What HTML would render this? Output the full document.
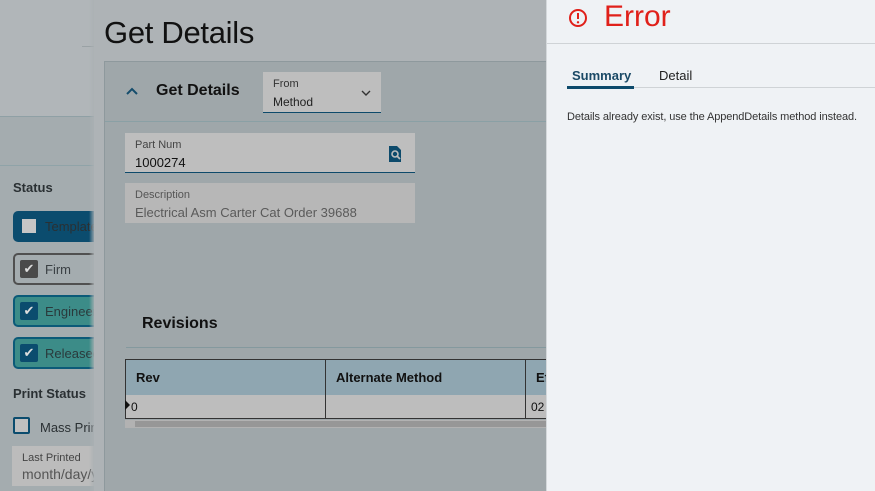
<!DOCTYPE html>
<html><head><meta charset="utf-8"><style>
*{box-sizing:border-box;margin:0;padding:0}
body{width:875px;height:491px;overflow:hidden;position:relative;font-family:"Liberation Sans",sans-serif;background:#a4acaf}
.abs{position:absolute}
</style></head><body>
<div class="abs" style="left:0;top:0;width:94px;height:117px;background:#b1b6b9"></div>
<div class="abs" style="left:82px;top:46px;width:12px;height:1px;background:#9aa2a5"></div>
<div class="abs" style="left:0;top:116px;width:94px;height:1px;background:#8fa0a5"></div>
<div class="abs" style="left:0;top:117px;width:94px;height:49px;background:#a4acaf"></div>
<div class="abs" style="left:0;top:165px;width:94px;height:1px;background:#8fa3a8"></div>
<div class="abs" style="left:13px;top:180px;font-size:13px;font-weight:bold;color:#2a3033">Status</div>
<div class="abs" style="left:13px;top:211px;width:90px;height:31px;background:#0b4c6e;border-radius:5px"></div>
<div class="abs" style="left:22px;top:219px;width:14px;height:14px;background:#c6c6c6"></div>
<div class="abs" style="left:45px;top:219px;font-size:13px;color:#2a3033">Template</div>
<div class="abs" style="left:13px;top:253px;width:90px;height:32px;border:2px solid #505050;border-radius:5px"></div>
<div class="abs" style="left:20px;top:260px;width:18px;height:18px;background:#4a4a4a;border-radius:2px;color:#ddd;font-size:13px;text-align:center;line-height:18px">✔</div>
<div class="abs" style="left:45px;top:262px;font-size:13px;color:#3a4044">Firm</div>
<div class="abs" style="left:13px;top:295px;width:90px;height:32px;border:2px solid #0b5a78;border-radius:5px;background:#3c8c88"></div>
<div class="abs" style="left:20px;top:302px;width:18px;height:18px;background:#0b4c6e;border-radius:2px;color:#ddd;font-size:13px;text-align:center;line-height:18px">✔</div>
<div class="abs" style="left:45px;top:304px;font-size:13px;color:#2a3a3c">Engineered</div>
<div class="abs" style="left:13px;top:337px;width:90px;height:32px;border:2px solid #0b5a78;border-radius:5px;background:#3c8c88"></div>
<div class="abs" style="left:20px;top:344px;width:18px;height:18px;background:#0b4c6e;border-radius:2px;color:#ddd;font-size:13px;text-align:center;line-height:18px">✔</div>
<div class="abs" style="left:45px;top:346px;font-size:13px;color:#2a3a3c">Released</div>
<div class="abs" style="left:13px;top:386px;font-size:13px;font-weight:bold;color:#2a3033">Print Status</div>
<div class="abs" style="left:13px;top:417px;width:17px;height:17px;border:2px solid #0b4c6e;background:#c0c0c0;border-radius:2px"></div>
<div class="abs" style="left:40px;top:420px;font-size:13px;color:#2a3033">Mass Print</div>
<div class="abs" style="left:12px;top:446px;width:90px;height:40px;background:#bcbcbc"></div>
<div class="abs" style="left:22px;top:452px;font-size:11px;color:#444">Last Printed</div>
<div class="abs" style="left:22px;top:466px;font-size:14px;color:#555">month/day/y</div>
<div class="abs" style="left:89px;top:0;width:6px;height:491px;background:linear-gradient(90deg,rgba(160,168,171,0),#aab0b3)"></div>
<div class="abs" style="left:94px;top:0;width:452px;height:491px;background:#aeb3b6;overflow:hidden">
  <div class="abs" style="left:10px;top:15px;font-size:31px;letter-spacing:-0.3px;color:#111">Get Details</div>
  <div class="abs" style="left:10px;top:61px;width:460px;height:440px;background:#9fa7aa;border-top:1px solid #8e999d;border-left:1px solid #8e999d"></div>
  <div class="abs" style="left:11px;top:121px;width:460px;height:1px;background:#8aa0a5"></div>
  <svg class="abs" style="left:32px;top:87px" width="12" height="8" viewBox="0 0 12 8"><path d="M1 7L6 2L11 7" fill="none" stroke="#154d6c" stroke-width="2"/></svg>
  <div class="abs" style="left:62px;top:82px;font-size:16px;font-weight:bold;color:#111">Get Details</div>
  <div class="abs" style="left:169px;top:72px;width:118px;height:41px;background:#bebebe;border-bottom:1px solid #0d4a6b"></div>
  <div class="abs" style="left:179px;top:78px;font-size:11px;color:#333">From</div>
  <div class="abs" style="left:179px;top:95px;font-size:12px;color:#222">Method</div>
  <svg class="abs" style="left:267px;top:90px" width="10" height="6" viewBox="0 0 10 6"><path d="M1 1L5 5L9 1" fill="none" stroke="#333" stroke-width="1.4"/></svg>
  <div class="abs" style="left:31px;top:133px;width:290px;height:40px;background:#bebebe;border-bottom:1px solid #0d4a6b"></div>
  <div class="abs" style="left:41px;top:139px;font-size:11px;color:#444">Part Num</div>
  <div class="abs" style="left:41px;top:155px;font-size:13px;color:#111">1000274</div>
  <svg class="abs" style="left:294px;top:146px" width="14" height="16" viewBox="0 0 14 16"><path d="M1 0H9L13 4V16H1Z" fill="#0d4a6b"/><circle cx="7" cy="8" r="3" fill="none" stroke="#bebebe" stroke-width="1.6"/><path d="M9 10L12 13" stroke="#bebebe" stroke-width="1.8"/></svg>
  <div class="abs" style="left:31px;top:183px;width:290px;height:40px;background:#b7b7b7"></div>
  <div class="abs" style="left:41px;top:189px;font-size:11px;color:#555">Description</div>
  <div class="abs" style="left:41px;top:205px;font-size:13px;color:#5a5a5a">Electrical Asm Carter Cat Order 39688</div>
  <div class="abs" style="left:48px;top:315px;font-size:16px;font-weight:bold;color:#111">Revisions</div>
  <div class="abs" style="left:32px;top:347px;width:440px;height:1px;background:#84999e"></div>
  <div class="abs" style="left:31px;top:359px;width:440px;height:37px;background:#8fa6b1;border:1px solid #333"></div>
  <div class="abs" style="left:31px;top:395px;width:440px;height:24px;background:#bdbdbd;border:1px solid #333;border-top:none"></div>
  <div class="abs" style="left:231px;top:359px;width:1px;height:60px;background:#333"></div>
  <div class="abs" style="left:431px;top:359px;width:1px;height:60px;background:#333"></div>
  <div class="abs" style="left:42px;top:370px;font-size:13px;font-weight:bold;color:#111">Rev</div>
  <div class="abs" style="left:242px;top:370px;font-size:13px;font-weight:bold;color:#111">Alternate Method</div>
  <div class="abs" style="left:442px;top:370px;font-size:13px;font-weight:bold;color:#111">Ef</div>
  <div class="abs" style="left:31px;top:400px;width:0;height:0;border-top:5px solid transparent;border-bottom:5px solid transparent;border-left:5px solid #111"></div>
  <div class="abs" style="left:37px;top:400px;font-size:12px;color:#111">0</div>
  <div class="abs" style="left:437px;top:400px;font-size:12px;color:#111">02</div>
  <div class="abs" style="left:31px;top:420px;width:440px;height:8px;background:#b2b2b2"></div>
  <div class="abs" style="left:41px;top:421px;width:430px;height:6px;background:#979797"></div>
</div>
<div class="abs" style="left:546px;top:0;width:329px;height:491px;background:#eff2f5;border-left:1px solid #d4d8db">
  <svg class="abs" style="left:21px;top:8px" width="20" height="20" viewBox="0 0 20 20"><circle cx="10" cy="10" r="8" fill="none" stroke="#e0201a" stroke-width="2"/><path d="M10 5V11" stroke="#e0201a" stroke-width="2"/><circle cx="10" cy="14.3" r="1.2" fill="#e0201a"/></svg>
  <div class="abs" style="left:57px;top:0px;font-size:30px;color:#e0201a">Error</div>
  <div class="abs" style="left:0;top:43px;width:329px;height:1px;background:#cfd3d6"></div>
  <div class="abs" style="left:25px;top:68px;font-size:13px;font-weight:bold;color:#1b4a66">Summary</div>
  <div class="abs" style="left:112px;top:68px;font-size:13px;color:#222">Detail</div>
  <div class="abs" style="left:20px;top:87px;width:309px;height:1px;background:#cfd3d6"></div>
  <div class="abs" style="left:20px;top:86px;width:67px;height:3px;background:#0d4a6b"></div>
  <div class="abs" style="left:20px;top:111px;font-size:11px;letter-spacing:-0.1px;color:#333">Details already exist, use the AppendDetails method instead.</div>
</div>
</body></html>
